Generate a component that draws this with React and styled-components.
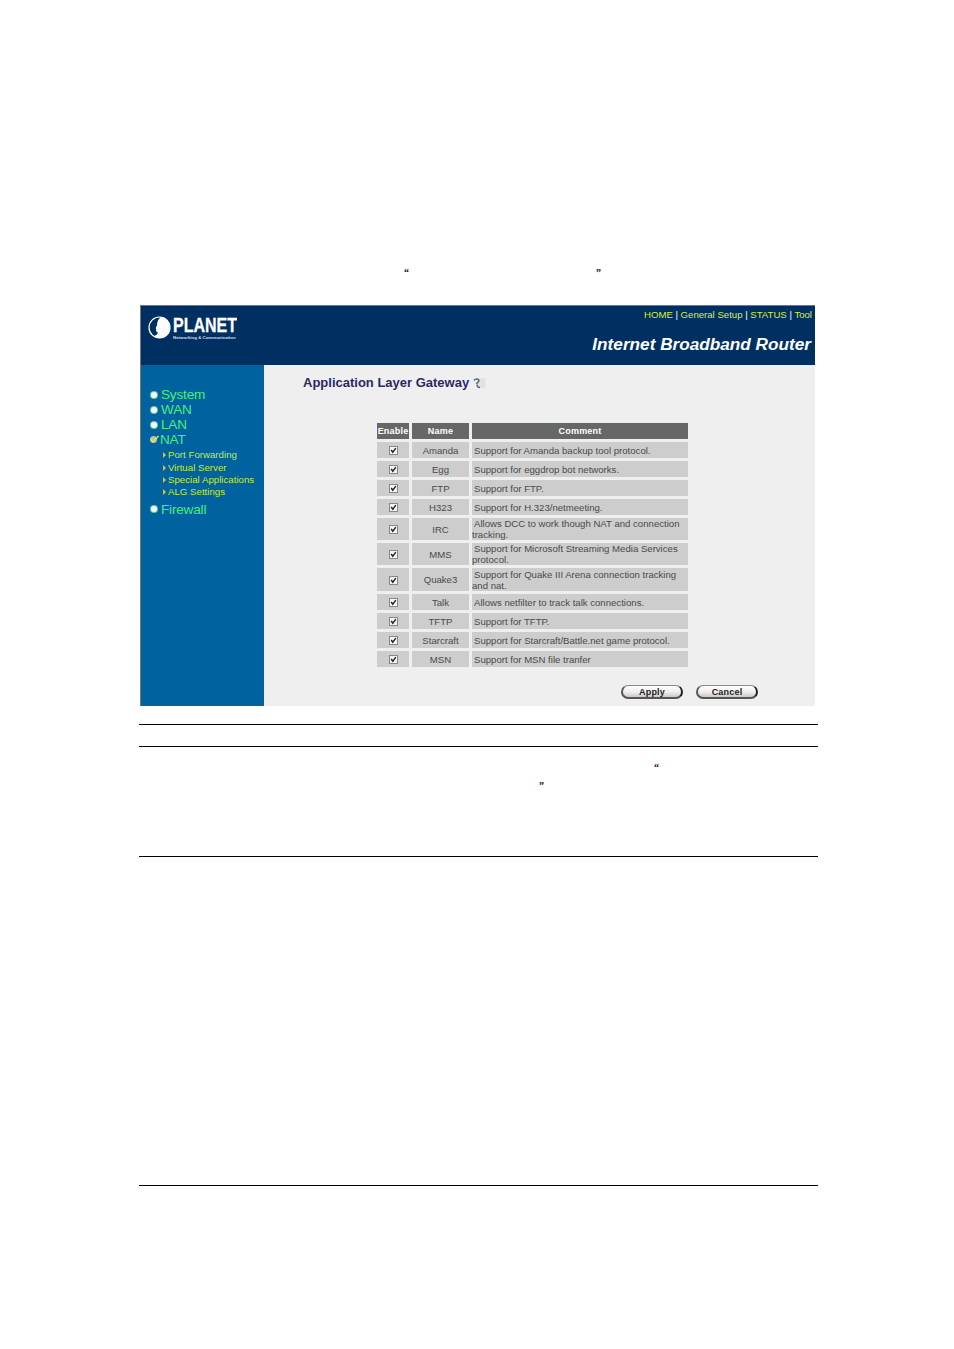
import React from "react";
import styled, { createGlobalStyle } from "styled-components";

const Global = createGlobalStyle`
  html, body { margin: 0; padding: 0; background: #fff; }
  body { font-family: "Liberation Sans", Arial, sans-serif; }
`;

const Page = styled.div`
  width: 954px;
  height: 1349px;
  padding: 267px 136px 0 139px;
  box-sizing: border-box;
  overflow: hidden;
`;
const QuoteLine = styled.div`
  display: flex;
  height: ${p => p.$h}px;
  padding-left: ${p => p.$left}px;
  gap: ${p => p.$gap || 0}px;
  font: 700 10px/12px "Liberation Serif", serif;
  color: #111;
`;
const Panel = styled.div`
  width: 675px;
  margin-left: 1px;
  height: 401px;
  display: grid;
  grid-template-columns: 123px 1fr;
  grid-template-rows: 59px 1fr;
  border-top: 1px solid #777;
  border-left: 1px solid #777;
  box-sizing: border-box;
  background: #efefef;
`;
const Header = styled.header`
  grid-column: 1 / 3;
  background: #002f62;
  display: flex;
  justify-content: space-between;
  padding: 0 3px 0 7px;
`;
const Logo = styled.div`
  display: flex;
  gap: 2px;
  padding-top: 10px;
`;
const Wordmark = styled.div`
  display: flex;
  flex-direction: column;
  color: #fff;
  width: 64px;
  margin-top: -1px;
`;
const Brand = styled.span`
  font: 700 20px/20px "Liberation Sans", sans-serif;
  display: block;
  transform: scaleX(0.8);
  transform-origin: left center;
  white-space: nowrap;
  -webkit-text-stroke: 0.3px #fff;
`;
const Tagline = styled.span`
  font: 700 4.4px/6px "Liberation Sans", sans-serif;
  white-space: nowrap;
  color: #d8dfe8;
`;
const HeaderRight = styled.div`
  display: flex;
  flex-direction: column;
  align-items: flex-end;
  padding-top: 2px;
`;
const TopLinks = styled.div`
  font: 9.6px/13px "Liberation Sans", sans-serif;
  color: #fff;
  white-space: nowrap;
`;
const TopLink = styled.span`
  color: #d6f23a;
`;
const Title = styled.div`
  margin: 11px 1px 0 0;
  font: italic 700 17.2px/24px "Liberation Sans", sans-serif;
  color: #fff;
  white-space: nowrap;
`;
const Sidebar = styled.nav`
  background: #00629e;
  padding: 22px 0 0 8px;
  display: flex;
  flex-direction: column;
`;
const NavItem = styled.div`
  display: flex;
  align-items: center;
  gap: ${p => p.$gap ?? 4}px;
  height: 15px;
  font: 13.6px/15px "Liberation Sans", sans-serif;
  color: #45f07a;
  margin-top: ${p => p.$top || 0}px;
  letter-spacing: -0.2px;
`;
const Dot = styled.span`
  width: 6px;
  height: 6px;
  margin-left: 2px;
  border-radius: 50%;
  background: #f4f8fb;
  box-shadow: 0 0 0 1px #6fc8a0;
  flex: none;
`;
const SubItem = styled.div`
  display: flex;
  align-items: center;
  gap: 2px;
  height: 12.4px;
  padding-left: 14px;
  font: 9.7px/12px "Liberation Sans", sans-serif;
  color: #c4ec3c;
  white-space: nowrap;
`;
const Arrow = styled.span`
  width: 0;
  height: 0;
  border-left: 3px solid #e5b93a;
  border-top: 3px solid transparent;
  border-bottom: 3px solid transparent;
  flex: none;
`;
const SubList = styled.div`
  margin-top: 2px;
  display: flex;
  flex-direction: column;
`;
const Main = styled.main`
  padding: 10px 0 0 39px;
  display: flex;
  flex-direction: column;
`;
const Heading = styled.h1`
  margin: 0;
  display: flex;
  align-items: center;
  gap: 3px;
  font: 700 13px/16px "Liberation Sans", sans-serif;
  color: #2b2a63;
  height: 16px;
`;
const Table = styled.table`
  margin: 29px 0 0 71px;
  border-collapse: separate;
  border-spacing: 3px;
  width: 317px;
  table-layout: fixed;
`;
const Th = styled.th`
  background: #666866;
  color: #fff;
  height: 16px;
  padding: 0;
  font: 700 9px/16px "Liberation Sans", sans-serif;
  letter-spacing: 0.2px;
  text-align: center;
  white-space: nowrap;
`;
const Td = styled.td`
  background: #cdcdcd;
  height: ${p => p.$h}px;
  padding: 0;
  text-align: center;
  color: #4a4a4a;
  font: 9.6px/11px "Liberation Sans", sans-serif;
`;
const CommentCell = styled(Td)`
  text-align: left;
`;
const Lead = styled.span`
  padding-left: 2px;
`;
const Box = styled.span`
  display: inline-flex;
  vertical-align: middle;
  width: 7px;
  height: 7px;
  background: #f4f4f4;
  border: 1px solid #888;
  box-sizing: content-box;
`;
const Actions = styled.div`
  display: flex;
  gap: 13px;
  padding-left: 318px;
  margin-top: 15px;
`;
const Pill = styled.button`
  width: 62px;
  height: 14px;
  padding: 0;
  border-radius: 7px;
  border: 1px solid #8d8d8d;
  border-left: 2px solid #555;
  border-right: 2px solid #222;
  border-bottom: 2px solid #555;
  background: linear-gradient(#fff, #f0eeec 55%, #c9c9c9);
  font: 700 9px/10px "Liberation Sans", sans-serif;
  letter-spacing: 0.2px;
  color: #222;
  box-sizing: border-box;
`;
const Rule = styled.hr`
  margin: 0;
  height: 1px;
  border: 0;
  background: #000;
  margin-top: ${p => p.$top}px;
`;

const Globe = () => (
  <svg width="23" height="23" viewBox="0 0 23 23">
    <circle cx="11.5" cy="11.5" r="10.5" fill="none" stroke="#fff" strokeWidth="1.2" />
    <path d="M13 1 C19 2 22 7 22 11.5 C22 17 18 21.5 12 22 C8 22 6 20.5 7 19.5 C9 19 10 18 9.5 16 C8 15.5 7.5 14.5 8.5 13.5 C7 12.5 8 11 9 9.5 C9 6 10 3 13 1 Z" fill="#fff" />
  </svg>
);
const Check = () => (
  <svg width="10" height="9" viewBox="0 0 10 9" style={{ flex: "none" }}>
    <circle cx="4.5" cy="4.5" r="3.5" fill="#a9c8b8" />
    <path d="M1.5 4 L4 7 L9.5 1" fill="none" stroke="#eee23a" strokeWidth="1.4" />
  </svg>
);
const Tick = () => (
  <svg width="7" height="7" viewBox="0 0 7 7">
    <path d="M1.2 3 L2.8 5.2 L5.8 1.2" fill="none" stroke="#222" strokeWidth="1.4" />
  </svg>
);
const Help = () => (
  <svg width="14" height="14" viewBox="0 0 14 14" style={{ flex: "none" }}>
    <path d="M5 2 H12 C13 2 13.5 3 13.5 4 V10 C13.5 11.5 13 12 12 12 H5 Z" fill="#e2e2de" />
    <path d="M2 4.5 C3.5 2.5 6.5 2.5 7 4.5 C7 6 5 6.5 4.5 8 M5 8.5 C5 10 6 11.5 8 11.5" fill="none" stroke="#56677a" strokeWidth="1.4" />
  </svg>
);

const rows = [
  ["Amanda", "Support for Amanda backup tool protocol.", 16],
  ["Egg", "Support for eggdrop bot networks.", 16],
  ["FTP", "Support for FTP.", 16],
  ["H323", "Support for H.323/netmeeting.", 16],
  ["IRC", "Allows DCC to work though NAT and connection tracking.", 22],
  ["MMS", "Support for Microsoft Streaming Media Services protocol.", 22],
  ["Quake3", "Support for Quake III Arena connection tracking and nat.", 23],
  ["Talk", "Allows netfilter to track talk connections.", 16],
  ["TFTP", "Support for TFTP.", 16],
  ["Starcraft", "Support for Starcraft/Battle.net game protocol.", 16],
  ["MSN", "Support for MSN file tranfer", 16],
];

export default function App() {
  return (
    <Page>
      <Global />
      <QuoteLine $h={38} $left={265} $gap={187}>
        <span>“</span>
        <span>”</span>
      </QuoteLine>
      <Panel>
        <Header>
          <Logo>
            <Globe />
            <Wordmark>
              <Brand>PLANET</Brand>
              <Tagline>Networking &amp; Communication</Tagline>
            </Wordmark>
          </Logo>
          <HeaderRight>
            <TopLinks>
              <TopLink>HOME</TopLink> | <TopLink>General Setup</TopLink> | <TopLink>STATUS</TopLink> | <TopLink>Tool</TopLink>
            </TopLinks>
            <Title>Internet Broadband Router</Title>
          </HeaderRight>
        </Header>
        <Sidebar>
          <NavItem><Dot />System</NavItem>
          <NavItem><Dot />WAN</NavItem>
          <NavItem><Dot />LAN</NavItem>
          <NavItem $gap={1}><Check />NAT</NavItem>
          <SubList>
            <SubItem><Arrow />Port Forwarding</SubItem>
            <SubItem><Arrow />Virtual Server</SubItem>
            <SubItem><Arrow />Special Applications</SubItem>
            <SubItem><Arrow />ALG Settings</SubItem>
          </SubList>
          <NavItem $top={3}><Dot />Firewall</NavItem>
        </Sidebar>
        <Main>
          <Heading>Application Layer Gateway <Help /></Heading>
          <Table>
            <colgroup>
              <col style={{ width: 32 }} />
              <col style={{ width: 57 }} />
              <col />
            </colgroup>
            <thead>
              <tr>
                <Th>Enable</Th>
                <Th>Name</Th>
                <Th>Comment</Th>
              </tr>
            </thead>
            <tbody>
              {rows.map(([name, comment, h]) => (
                <tr key={name}>
                  <Td $h={h}><Box><Tick /></Box></Td>
                  <Td $h={h}>{name}</Td>
                  <CommentCell $h={h}><Lead>{comment}</Lead></CommentCell>
                </tr>
              ))}
            </tbody>
          </Table>
          <Actions>
            <Pill>Apply</Pill>
            <Pill>Cancel</Pill>
          </Actions>
        </Main>
      </Panel>
      <Rule $top={18} />
      <Rule $top={21} />
      <QuoteLine $h={18} $left={515} style={{ marginTop: 15 }}>
        <span>“</span>
      </QuoteLine>
      <QuoteLine $h={13} $left={400}>
        <span>”</span>
      </QuoteLine>
      <Rule $top={63} />
      <Rule $top={328} />
    </Page>
  );
}
